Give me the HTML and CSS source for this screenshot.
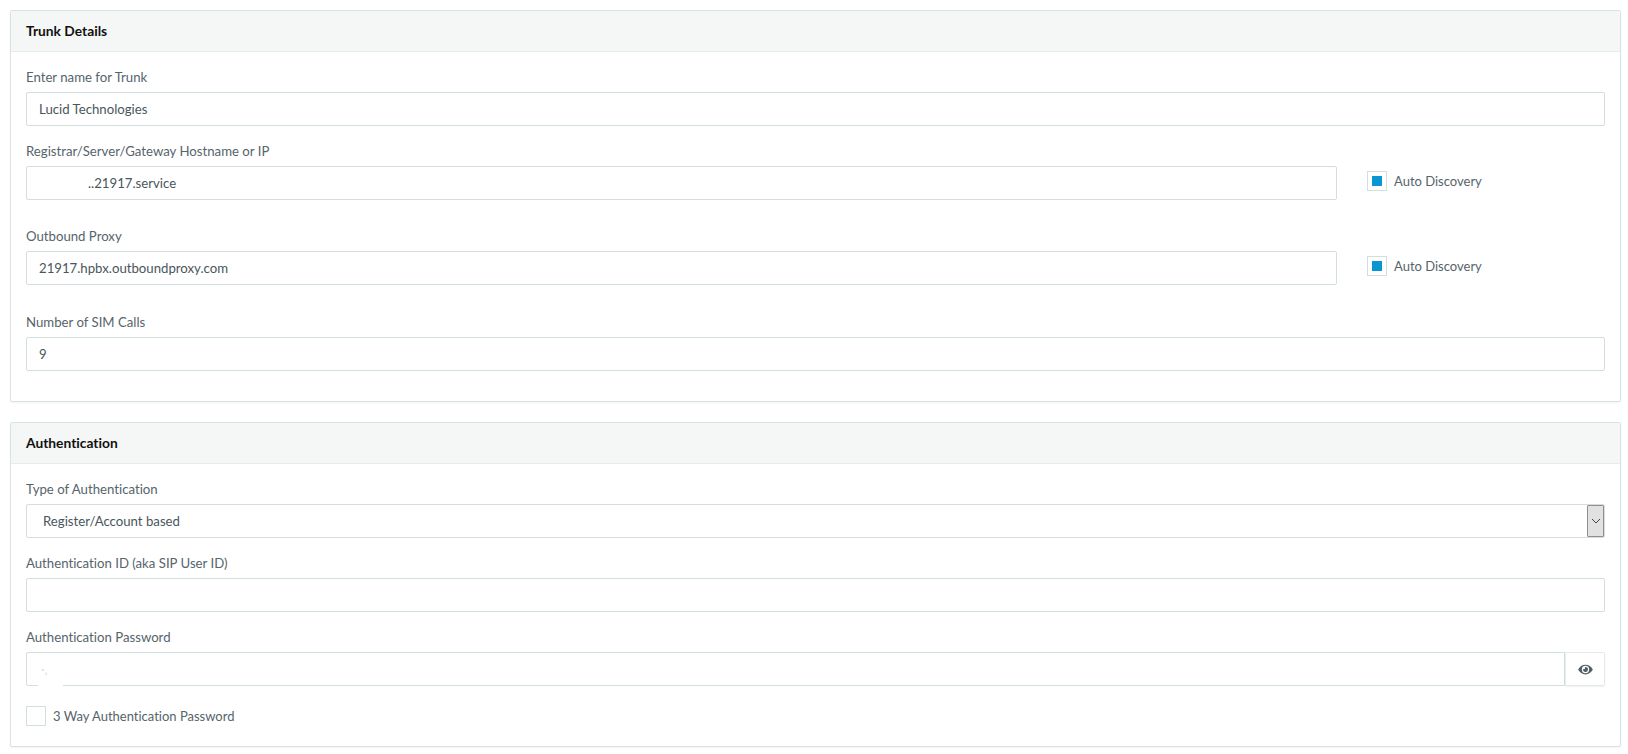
FILE: index.html
```html
<!DOCTYPE html>
<html lang="en">
<head>
  <meta charset="UTF-8" />
  <title>Trunk Details</title>
  <link rel="stylesheet" href="styles.css">
</head>
<body>
  <div class="card">
    <div class="card-header">Trunk Details</div>
    <div class="card-body">
      <div class="form-group">
        <label>Enter name for Trunk</label>
        <input class="form-control" type="text" value="Lucid Technologies">
      </div>
      <div class="form-row">
        <div class="form-group">
          <label>Registrar/Server/Gateway Hostname or IP</label>
          <input class="form-control redacted" type="text" value="..21917.service">
        </div>
        <label class="check"><span class="check-box checked"></span>Auto Discovery</label>
      </div>
      <div class="form-row">
        <div class="form-group">
          <label>Outbound Proxy</label>
          <input class="form-control" type="text" value="21917.hpbx.outboundproxy.com">
        </div>
        <label class="check"><span class="check-box checked"></span>Auto Discovery</label>
      </div>
      <div class="form-group">
        <label>Number of SIM Calls</label>
        <input class="form-control" type="text" value="9">
      </div>
    </div>
  </div>

  <div class="card">
    <div class="card-header">Authentication</div>
    <div class="card-body">
      <div class="form-group">
        <label>Type of Authentication</label>
        <div class="select-wrap">
          <select class="form-control">
            <option>Register/Account based</option>
          </select>
          <span class="select-btn">
            <svg width="10" height="6" viewBox="0 0 10 6"><path d="M1 1l4 4 4-4" fill="none" stroke="#444" stroke-width="1"/></svg>
          </span>
        </div>
      </div>
      <div class="form-group">
        <label>Authentication ID (aka SIP User ID)</label>
        <input class="form-control" type="text">
      </div>
      <div class="form-group">
        <label>Authentication Password</label>
        <div class="input-group">
          <input class="form-control faint" type="text" value="·,">
          <span class="input-addon">
            <svg width="15" height="13" viewBox="0 0 576 512"><path fill="#4f5f66" d="M572.52 241.4C518.29 135.59 410.93 64 288 64S57.68 135.64 3.48 241.41a32.35 32.35 0 0 0 0 29.19C57.71 376.41 165.07 448 288 448s230.32-71.64 284.52-177.41a32.35 32.35 0 0 0 0-29.19zM288 400a144 144 0 1 1 144-144 143.93 143.93 0 0 1-144 144zm0-240a95.31 95.31 0 0 0-25.31 3.79 47.85 47.85 0 0 1-66.9 66.9A95.78 95.78 0 1 0 288 160z"/></svg>
          </span>
          <span class="smudge"></span>
        </div>
      </div>
      <label class="check check-last"><span class="check-box"></span>3 Way Authentication Password</label>
    </div>
  </div>
</body>
</html>
```

FILE: styles.css
```css
/* General */
body { margin: 0; padding: 10px 7px 0 10px; background: #fff; font-family: "Lato", "Liberation Sans", sans-serif; font-size: 13.2px; font-variant-ligatures: none; color: #56646b; }

/* Cards */
.card { border: 1px solid #d9e3e3; border-radius: 2px; margin-bottom: 20px; box-shadow: 0 1px 2px rgba(0,0,0,0.05); }
.card-header { height: 40px; line-height: 40px; padding: 0 15px; background: #f5f7f6; border-bottom: 1px solid #e6ecec; font-size: 13.8px; font-weight: 700; color: #111; }
.card-body { padding: 15px 15px 15px; }

/* Form */
.form-group { margin-bottom: 15px; flex: 1; min-width: 0; }
.form-group label { display: block; line-height: 20px; margin-bottom: 5px; }
.form-control { display: block; box-sizing: border-box; width: 100%; height: 34px; padding: 0 12px; background: #fff; border: 1px solid #d3dedf; border-radius: 2px; font: inherit; font-variant-ligatures: none; color: #4a565c; outline: none; }
.form-control.redacted { padding-left: 61px; }
.form-control.faint { color: #dcdcdc; padding-left: 14px; }
.form-row { display: flex; align-items: flex-start; gap: 30px; margin-bottom: 26px; }
.form-row + .form-row { margin-bottom: 27px; }
.form-row .form-group { margin-bottom: 0; }
.form-row .check { flex: none; width: 238px; margin-top: 30px; }

/* Checkboxes */
.check { display: flex; align-items: center; gap: 7px; line-height: 20px; font-size: 13px; }
.check-box { box-sizing: border-box; width: 20px; height: 20px; flex: none; display: flex; align-items: center; justify-content: center; border: 1px solid #d3dedf; background: #fff; }
.check-box.checked::before { content: ""; width: 10px; height: 10px; background: #0a96d2; }
.check-last { margin: 20px 0 5px; }

/* Select */
.select-wrap { position: relative; }
.select-wrap select { appearance: none; padding-left: 16px; }
.select-btn { position: absolute; top: 1px; right: 1px; box-sizing: border-box; width: 17px; height: 32px; display: flex; align-items: center; justify-content: center; background: #e1e1e1; border: 1px solid #8f8f8f; border-radius: 1px; }

/* Password */
.input-group { position: relative; display: flex; }
.input-group .form-control { flex: 1; border-radius: 2px 0 0 2px; }
.input-addon { box-sizing: border-box; width: 40px; height: 34px; display: flex; align-items: center; justify-content: center; border: 1px solid #e3e9e9; border-left-color: #e8eded; border-radius: 0 2px 2px 0; box-shadow: 0 1px 2px rgba(0,0,0,0.06); }
.smudge { position: absolute; left: 12px; bottom: -2px; width: 25px; height: 7px; background: #fff; }
```
